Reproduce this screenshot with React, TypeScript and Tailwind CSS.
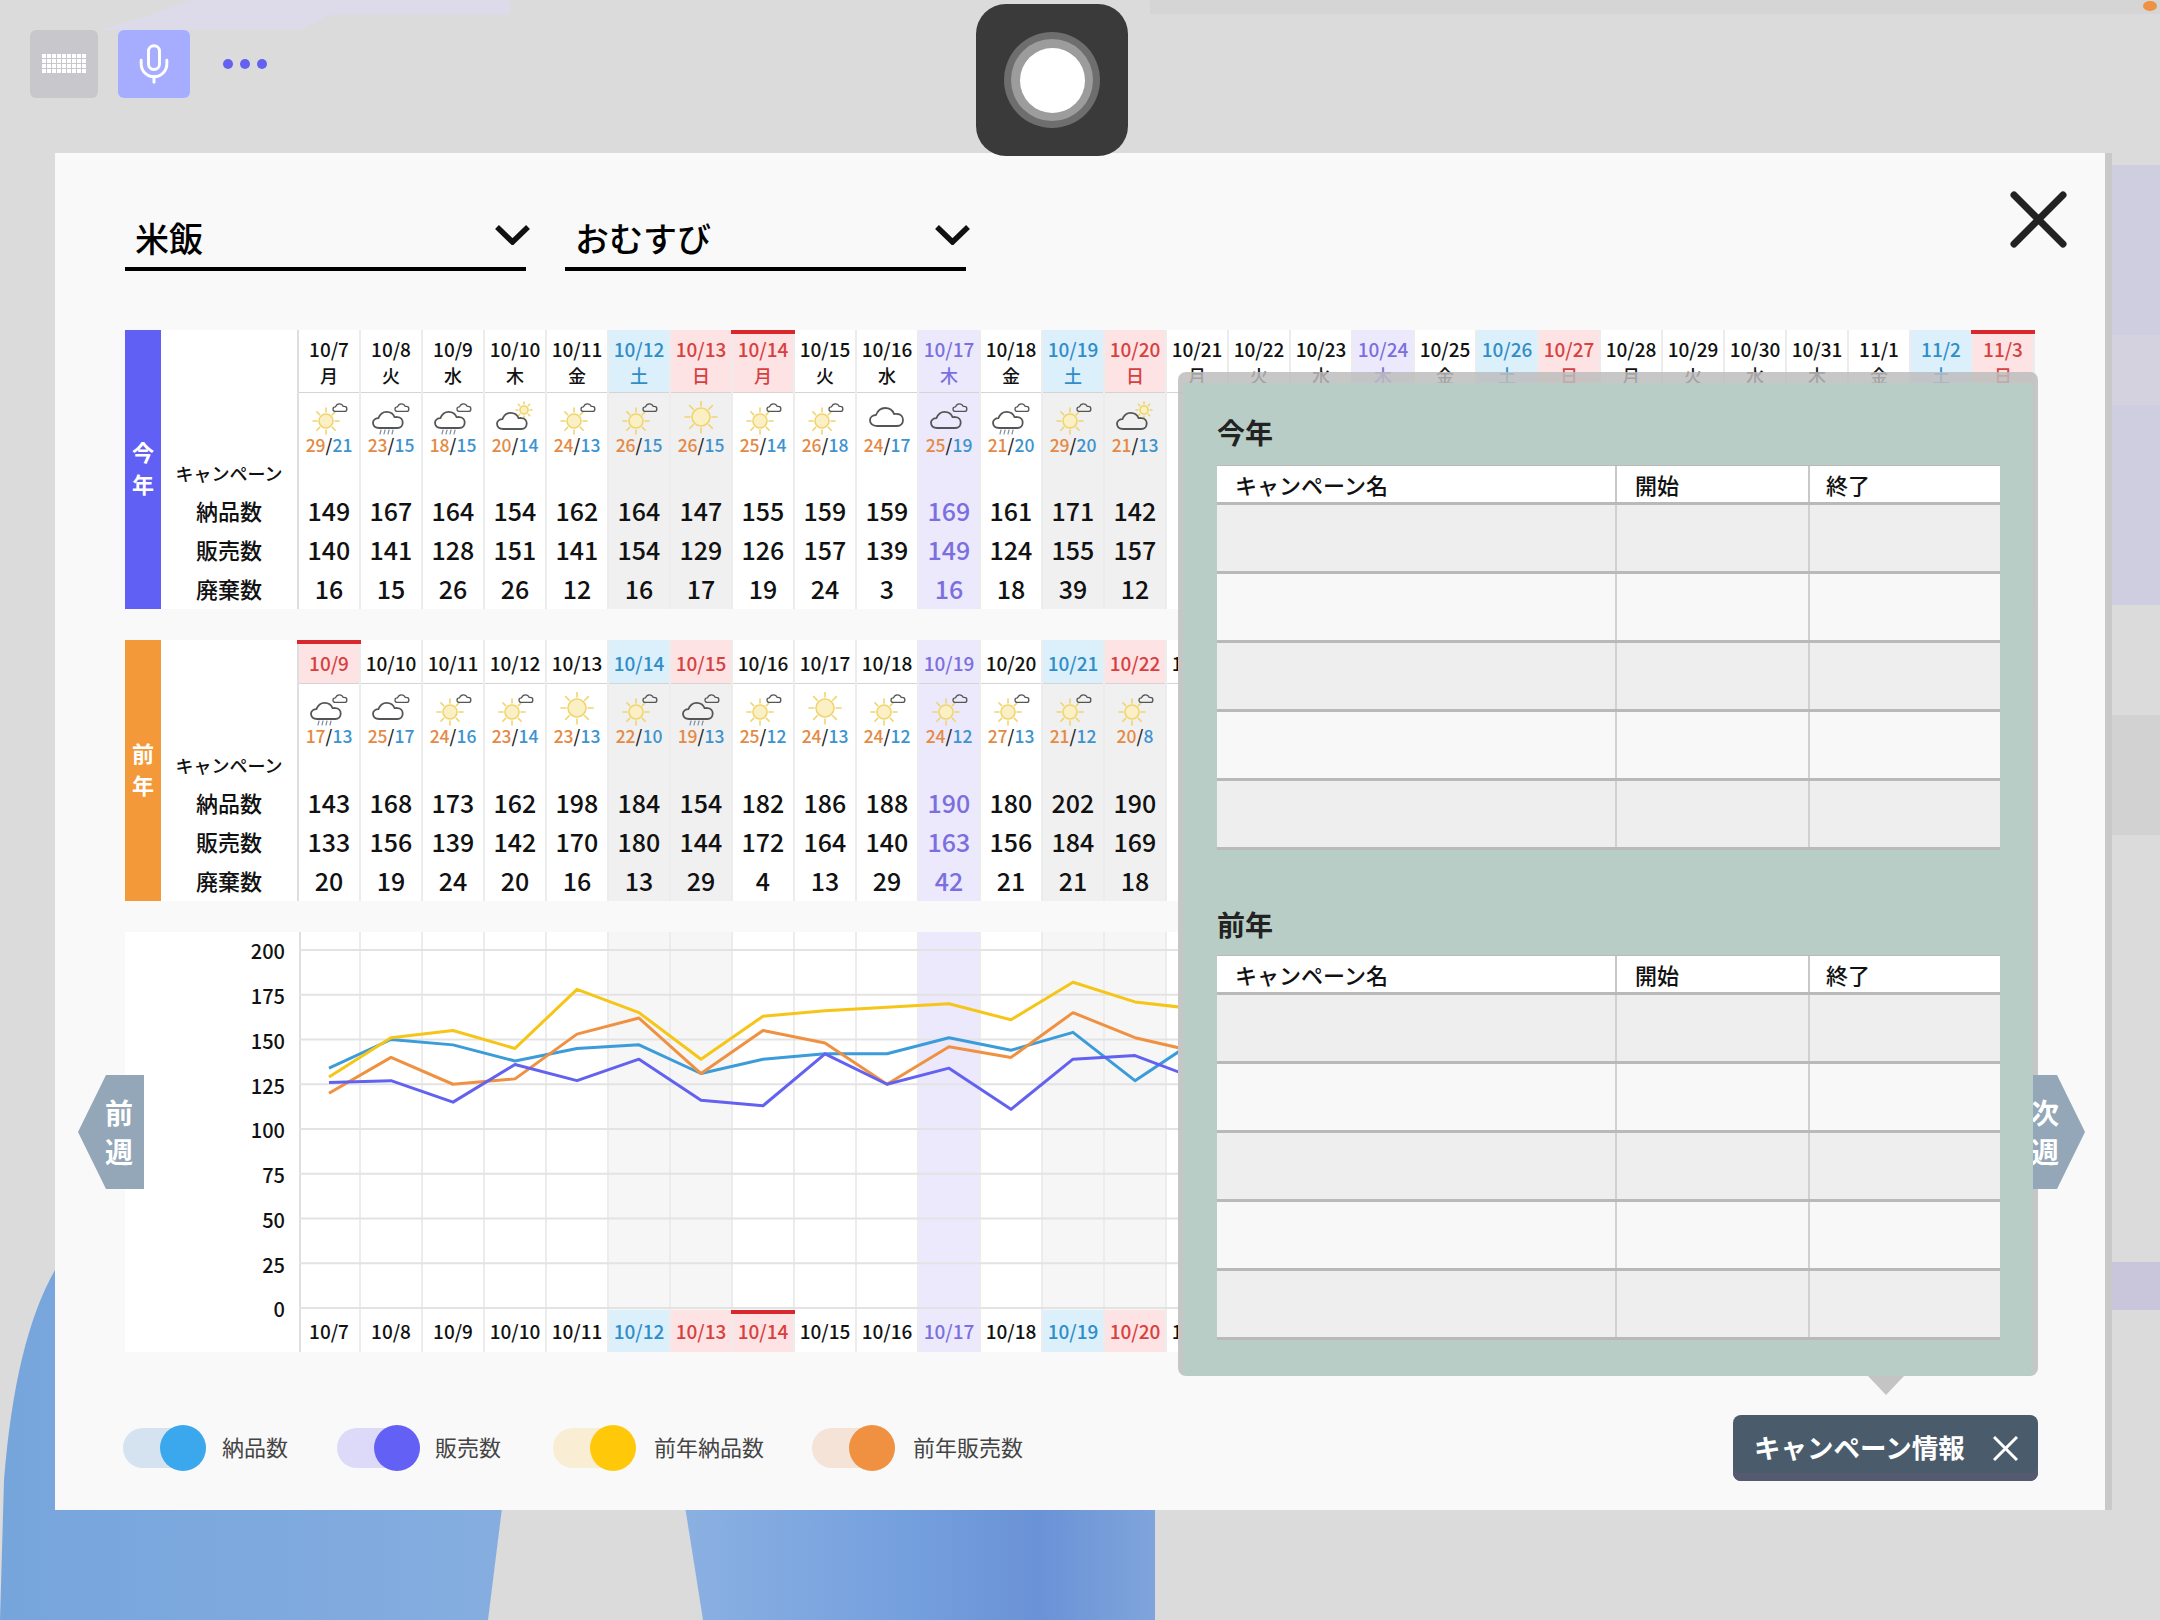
import React from 'react';
import { Mic } from 'lucide-react';

type DayKind = 'normal' | 'sat' | 'sun' | 'holiday' | 'today';
type Sky = 'sc' | 'crc' | 'cc' | 'cs' | 's' | 'c';

type Day = {
  date: string;
  week?: string;
  kind: DayKind;
  sky?: Sky;
  hi?: number;
  lo?: number;
  values?: number[];
};

const thisYear: Day[] = [
  { date: '10/7', week: '月', kind: 'normal', sky: 'sc', hi: 29, lo: 21, values: [149, 140, 16] },
  { date: '10/8', week: '火', kind: 'normal', sky: 'crc', hi: 23, lo: 15, values: [167, 141, 15] },
  { date: '10/9', week: '水', kind: 'normal', sky: 'crc', hi: 18, lo: 15, values: [164, 128, 26] },
  { date: '10/10', week: '木', kind: 'normal', sky: 'cs', hi: 20, lo: 14, values: [154, 151, 26] },
  { date: '10/11', week: '金', kind: 'normal', sky: 'sc', hi: 24, lo: 13, values: [162, 141, 12] },
  { date: '10/12', week: '土', kind: 'sat', sky: 'sc', hi: 26, lo: 15, values: [164, 154, 16] },
  { date: '10/13', week: '日', kind: 'sun', sky: 's', hi: 26, lo: 15, values: [147, 129, 17] },
  { date: '10/14', week: '月', kind: 'holiday', sky: 'sc', hi: 25, lo: 14, values: [155, 126, 19] },
  { date: '10/15', week: '火', kind: 'normal', sky: 'sc', hi: 26, lo: 18, values: [159, 157, 24] },
  { date: '10/16', week: '水', kind: 'normal', sky: 'c', hi: 24, lo: 17, values: [159, 139, 3] },
  { date: '10/17', week: '木', kind: 'today', sky: 'cc', hi: 25, lo: 19, values: [169, 149, 16] },
  { date: '10/18', week: '金', kind: 'normal', sky: 'crc', hi: 21, lo: 20, values: [161, 124, 18] },
  { date: '10/19', week: '土', kind: 'sat', sky: 'sc', hi: 29, lo: 20, values: [171, 155, 39] },
  { date: '10/20', week: '日', kind: 'sun', sky: 'cs', hi: 21, lo: 13, values: [142, 157, 12] },
  { date: '10/21', week: '月', kind: 'normal' },
  { date: '10/22', week: '火', kind: 'normal' },
  { date: '10/23', week: '水', kind: 'normal' },
  { date: '10/24', week: '木', kind: 'today' },
  { date: '10/25', week: '金', kind: 'normal' },
  { date: '10/26', week: '土', kind: 'sat' },
  { date: '10/27', week: '日', kind: 'sun' },
  { date: '10/28', week: '月', kind: 'normal' },
  { date: '10/29', week: '火', kind: 'normal' },
  { date: '10/30', week: '水', kind: 'normal' },
  { date: '10/31', week: '木', kind: 'normal' },
  { date: '11/1', week: '金', kind: 'normal' },
  { date: '11/2', week: '土', kind: 'sat' },
  { date: '11/3', week: '日', kind: 'holiday' },
];

const lastYear: Day[] = [
  { date: '10/9', kind: 'holiday', sky: 'crc', hi: 17, lo: 13, values: [143, 133, 20] },
  { date: '10/10', kind: 'normal', sky: 'cc', hi: 25, lo: 17, values: [168, 156, 19] },
  { date: '10/11', kind: 'normal', sky: 'sc', hi: 24, lo: 16, values: [173, 139, 24] },
  { date: '10/12', kind: 'normal', sky: 'sc', hi: 23, lo: 14, values: [162, 142, 20] },
  { date: '10/13', kind: 'normal', sky: 's', hi: 23, lo: 13, values: [198, 170, 16] },
  { date: '10/14', kind: 'sat', sky: 'sc', hi: 22, lo: 10, values: [184, 180, 13] },
  { date: '10/15', kind: 'sun', sky: 'crc', hi: 19, lo: 13, values: [154, 144, 29] },
  { date: '10/16', kind: 'normal', sky: 'sc', hi: 25, lo: 12, values: [182, 172, 4] },
  { date: '10/17', kind: 'normal', sky: 's', hi: 24, lo: 13, values: [186, 164, 13] },
  { date: '10/18', kind: 'normal', sky: 'sc', hi: 24, lo: 12, values: [188, 140, 29] },
  { date: '10/19', kind: 'today', sky: 'sc', hi: 24, lo: 12, values: [190, 163, 42] },
  { date: '10/20', kind: 'normal', sky: 'sc', hi: 27, lo: 13, values: [180, 156, 21] },
  { date: '10/21', kind: 'sat', sky: 'sc', hi: 21, lo: 12, values: [202, 184, 21] },
  { date: '10/22', kind: 'sun', sky: 'sc', hi: 20, lo: 8, values: [190, 169, 18] },
  { date: '10/23', kind: 'normal' },
];

const chartDays: { date: string; kind: DayKind }[] = thisYear.slice(0, 15);

const bodyBg: Record<DayKind, string> = {
  normal: 'bg-white',
  sat: 'bg-[#f0f0f0]',
  sun: 'bg-[#f0f0f0]',
  holiday: 'bg-white',
  today: 'bg-[#ece9fc]',
};

const chartBg: Record<DayKind, string> = {
  normal: 'bg-white',
  sat: 'bg-[#f6f6f6]',
  sun: 'bg-[#f6f6f6]',
  holiday: 'bg-white',
  today: 'bg-[#ece9fc]',
};

const headBg: Record<DayKind, string> = {
  normal: 'bg-white',
  sat: 'bg-[#dcf0fc]',
  sun: 'bg-[#fde3e3]',
  holiday: 'bg-[#fde3e3]',
  today: 'bg-[#ece9fc]',
};

const headText: Record<DayKind, string> = {
  normal: 'text-[#111111]',
  sat: 'text-[#2f8dc8]',
  sun: 'text-[#d8403f]',
  holiday: 'text-[#d8403f]',
  today: 'text-[#7b6fe0]',
};

const CJK = "font-['Noto_Sans_CJK_JP',sans-serif]";

const CLOUD =
  'M7 20 C2 20 0 17 0 14 C0 11 3 9 6 9 C8 4 12 2 15 2 C20 2 23 5 24 8 C25 8 26 7.5 27 8 C31 8 33 11 33 14 C33 17 31 20 27 20 Z';

const Sun = ({ cx, cy, r, ray }: { cx: number; cy: number; r: number; ray: number }) => (
  <g stroke="#f0d56f" fill="none" strokeWidth="1.6" strokeLinecap="round">
    <circle cx={cx} cy={cy} r={r} fill="#fbf0c4" />
    {[0, 45, 90, 135, 180, 225, 270, 315].map((a) => {
      const t = (a * Math.PI) / 180;
      return (
        <line
          key={a}
          x1={cx + Math.cos(t) * (r + 2)}
          y1={cy + Math.sin(t) * (r + 2)}
          x2={cx + Math.cos(t) * (r + ray)}
          y2={cy + Math.sin(t) * (r + ray)}
        />
      );
    })}
  </g>
);

const Cloud = ({ x, y, s, w = 1.8 }: { x: number; y: number; s: number; w?: number }) => (
  <path
    d={CLOUD}
    transform={`translate(${x} ${y}) scale(${s})`}
    fill="none"
    stroke="#555555"
    strokeWidth={w / s}
    strokeLinejoin="round"
  />
);

const Rain = () => (
  <g stroke="#7d8fa3" strokeWidth="1.2" strokeLinecap="round">
    <line x1="9" y1="33" x2="10" y2="29" />
    <line x1="13" y1="33" x2="14" y2="29" />
    <line x1="17" y1="33" x2="18" y2="29" />
    <line x1="21" y1="33" x2="22" y2="29" />
  </g>
);

const WeatherIcon = ({ sky }: { sky: Sky }) => (
  <svg viewBox="0 0 40 34" className="h-[34px] w-[40px] shrink-0">
    {sky === 'sc' && (
      <>
        <Sun cx={17} cy={20} r={7} ray={6} />
        <Cloud x={24} y={2} s={0.42} w={1.3} />
      </>
    )}
    {sky === 's' && <Sun cx={20} cy={16} r={9} ray={7} />}
    {sky === 'c' && <Cloud x={3} y={5} s={1} />}
    {(sky === 'crc' || sky === 'cc') && (
      <>
        <Cloud x={2} y={9} s={0.9} />
        <Cloud x={24} y={2} s={0.42} w={1.3} />
      </>
    )}
    {sky === 'crc' && <Rain />}
    {sky === 'cs' && (
      <>
        <Sun cx={29} cy={9} r={4} ray={4} />
        <Cloud x={2} y={10} s={0.9} />
      </>
    )}
  </svg>
);

const rowLabels = ['納品数', '販売数', '廃棄数'];

const LabelColumn = ({ headClass, weatherClass }: { headClass: string; weatherClass: string }) => (
  <div className="w-[138px] shrink-0 bg-white border-r-2 border-[#dfdfdf] flex flex-col items-center">
    <div className={headClass} />
    <div className={weatherClass} />
    <div className="h-[35px] flex items-center text-[18px] font-medium text-[#111111]">キャンペーン</div>
    {rowLabels.map((label) => (
      <div key={label} className="h-[39px] flex items-center text-[22px] font-medium text-[#111111]">
        {label}
      </div>
    ))}
  </div>
);

const DayColumn = ({ day, compact }: { day: Day; compact: boolean }) => {
  const numberColor = day.kind === 'today' ? 'text-[#7b6fe0]' : 'text-[#111111]';
  return (
    <div className={`relative w-[62px] shrink-0 border-r-2 border-[#ececec] flex flex-col items-center ${bodyBg[day.kind]}`}>
      <div
        className={`w-full flex flex-col items-center border-b border-[#d4d4d4] font-medium ${headBg[day.kind]} ${headText[day.kind]} ${
          compact ? 'h-[44px] pt-[10px]' : 'h-[63px] pt-[6px]'
        }`}
      >
        <span className="text-[19px] leading-[26px] whitespace-nowrap">{day.date}</span>
        {day.week && <span className="text-[18px] leading-[26px]">{day.week}</span>}
      </div>
      {day.kind === 'holiday' && <div className="absolute top-0 -left-[2px] w-[64px] h-[4px] bg-[#d8282d]" />}
      <div className={`w-full flex flex-col items-center pt-[8px] ${compact ? 'h-[64px]' : 'h-[63px]'}`}>
        {day.sky && <WeatherIcon sky={day.sky} />}
        {day.hi !== undefined && (
          <div className="text-[17.5px] leading-[20px] font-medium whitespace-nowrap">
            <span className="text-[#e58a45]">{day.hi}</span>
            <span className="text-[#222222]">/</span>
            <span className="text-[#3d93cf]">{day.lo}</span>
          </div>
        )}
      </div>
      <div className="h-[35px]" />
      {day.values?.map((v, i) => (
        <div key={i} className={`h-[39px] flex items-center text-[25px] font-medium ${numberColor}`}>
          {v}
        </div>
      ))}
    </div>
  );
};

const Band = ({ text, color }: { text: string[]; color: string }) => (
  <div className={`w-[36px] shrink-0 flex flex-col items-center justify-center pb-[6px] text-white text-[22px] font-bold leading-[32px] ${color}`}>
    {text.map((t) => (
      <span key={t}>{t}</span>
    ))}
  </div>
);

const series = [
  { color: '#3b9cd9', data: [134, 150, 147, 138, 145, 147, 131, 139, 142, 142, 151, 144, 154, 127, 150] },
  { color: '#f5c518', data: [129, 151, 155, 145, 178, 165, 139, 163, 166, 168, 170, 161, 182, 171, 167] },
  { color: '#ef9141', data: [120, 140, 125, 128, 153, 162, 131, 155, 148, 125, 146, 140, 165, 151, 143] },
  { color: '#6361f0', data: [126, 127, 115, 136, 127, 139, 116, 113, 142, 125, 134, 111, 139, 141, 128] },
];

const axis = [200, 175, 150, 125, 100, 75, 50, 25, 0];

const Chart = () => (
  <div className="mt-[31px] w-[1053px] h-[420px] flex bg-white overflow-hidden">
    <div className="w-[174px] shrink-0 pr-[14px] -mt-[3px] flex flex-col items-end text-[20px] font-medium text-[#111111]">
      {axis.map((a) => (
        <div key={a} className="h-[44.75px] shrink-0 flex items-center">
          {a}
        </div>
      ))}
    </div>
    <div className="relative w-[879px] shrink-0 flex overflow-hidden">
      {chartDays.map((d) => (
        <div key={d.date} className={`relative w-[62px] shrink-0 border-r-2 border-[#ececec] flex flex-col justify-end ${chartBg[d.kind]}`}>
          <div className={`h-[42px] flex items-center justify-center text-[19px] font-medium whitespace-nowrap ${headBg[d.kind]} ${headText[d.kind]}`}>
            {d.date}
          </div>
          {d.kind === 'holiday' && <div className="absolute bottom-[38px] -left-[2px] w-[64px] h-[4px] bg-[#d8282d]" />}
        </div>
      ))}
      <svg className="absolute inset-0 w-[879px] h-[420px]" viewBox="0 0 879 420">
        <line x1="0" y1="0" x2="0" y2="420" stroke="#dfdfdf" strokeWidth="4" />
        {axis.map((a) => (
          <line key={a} x1="0" x2="879" y1={376 - a * 1.79} y2={376 - a * 1.79} stroke="#e3e3e3" strokeWidth="2" />
        ))}
        {series.map((s) => (
          <polyline
            key={s.color}
            fill="none"
            stroke={s.color}
            strokeWidth="3"
            strokeLinejoin="round"
            points={s.data.map((v, i) => `${30 + i * 62},${376 - v * 1.79}`).join(' ')}
          />
        ))}
      </svg>
    </div>
  </div>
);

const Toggle = ({ track, knob, label, gap, width }: { track: string; knob: string; label: string; gap: string; width: string }) => (
  <div className={`flex items-center ${width}`}>
    <div className={`w-[83px] h-[40px] rounded-full flex items-center justify-end ${track}`}>
      <div className={`w-[46px] h-[46px] rounded-full shrink-0 ${knob}`} />
    </div>
    <span className={`text-[22px] text-[#444444] whitespace-nowrap -mt-[3px] ${gap}`}>{label}</span>
  </div>
);

const Select = ({ value }: { value: string }) => (
  <div className="w-[401px] h-[61px] border-b-4 border-black flex items-center justify-between pl-[10px]">
    <span className="text-[34px] font-medium text-black leading-none -mt-[2px]">{value}</span>
    <svg viewBox="0 0 35 20" className="w-[35px] h-[20px] -mr-[4px] -mt-[8px]" fill="none" stroke="#111111" strokeWidth="5.5">
      <path d="M2 2 L17.5 17 L33 2" />
    </svg>
  </div>
);

const CampaignTable = () => (
  <div className="w-[783px] text-[#111111]">
    <div className="h-[40px] grid grid-cols-[398px_193px_192px] bg-white border-b-[3px] border-t border-[#b9b9b9] text-[22px] font-medium leading-[36px]">
      <div className="pl-[18px]">キャンペーン名</div>
      <div className="pl-[18px] border-l-2 border-[#c8c8c8]">開始</div>
      <div className="pl-[16px] border-l-2 border-[#c8c8c8]">終了</div>
    </div>
    {[0, 1, 2, 3, 4].map((r) => (
      <div key={r} className={`h-[69px] grid grid-cols-[398px_193px_192px] border-b-[3px] border-[#b9b9b9] ${r % 2 === 0 ? 'bg-[#eeeeee]' : 'bg-[#f8f8f8]'}`}>
        <div />
        <div className="border-l-2 border-[#d0d0d0]" />
        <div className="border-l-2 border-[#d0d0d0]" />
      </div>
    ))}
  </div>
);

const Wallpaper = () => (
  <svg className="absolute inset-0 w-full h-full" viewBox="0 0 2160 1620">
    <defs>
      <linearGradient id="cloth" gradientUnits="userSpaceOnUse" x1="0" y1="0" x2="1155" y2="0">
        <stop offset="0" stopColor="#76a5dc" />
        <stop offset="0.43" stopColor="#85ade0" />
        <stop offset="0.6" stopColor="#8ab0e2" />
        <stop offset="0.78" stopColor="#75a0de" />
        <stop offset="0.9" stopColor="#6a92d6" />
        <stop offset="1" stopColor="#80a5dc" />
      </linearGradient>
    </defs>
    <rect x="1150" y="0" width="1010" height="14" fill="#d5d5d5" />
    <path d="M100 30 L300 30 L330 15 L510 15 L510 0 L190 0 L150 15 Z" fill="#dddbe9" />
    <rect x="2112" y="165" width="48" height="170" fill="#cfcde0" />
    <rect x="2112" y="335" width="48" height="70" fill="#d3d2de" />
    <rect x="2112" y="405" width="48" height="200" fill="#cfcde0" />
    <rect x="2112" y="715" width="48" height="120" fill="#d2d2d2" />
    <rect x="2112" y="1262" width="48" height="48" fill="#c9c6dc" />
    <ellipse cx="2150" cy="6" rx="7" ry="5" fill="#ef9141" />
    <path d="M55 1270 Q15 1340 4 1480 L0 1620 L488 1620 L503 1500 L55 1500 Z" fill="url(#cloth)" />
    <path d="M684 1500 L703 1620 L1155 1620 L1155 1500 Z" fill="url(#cloth)" />
  </svg>
);

export default function App() {
  return (
    <div className={`relative w-[2160px] h-[1620px] overflow-hidden bg-[#dbdbdb] ${CJK}`}>
      <Wallpaper />

      <div className="relative flex items-center pt-[30px] pl-[30px]">
        <div className="w-[68px] h-[68px] rounded-[6px] bg-[#c8c8cc] flex items-center justify-center">
          <svg viewBox="0 0 44 20" className="w-[44px] h-[20px]" fill="#ffffff">
            {[0, 1, 2, 3].map((r) =>
              [0, 1, 2, 3, 4, 5, 6, 7, 8].map((c) => <rect key={`${r}-${c}`} x={c * 5} y={r * 5} width="4" height="4" />)
            )}
          </svg>
        </div>
        <div className="ml-[20px] w-[72px] h-[68px] rounded-[6px] bg-[#a6adff] flex items-center justify-center text-white">
          <Mic size={44} strokeWidth={1.6} />
        </div>
        <div className="ml-[33px] flex gap-[7px]">
          <div className="w-[10px] h-[10px] rounded-full bg-[#6561f0]" />
          <div className="w-[10px] h-[10px] rounded-full bg-[#6561f0]" />
          <div className="w-[10px] h-[10px] rounded-full bg-[#6561f0]" />
        </div>
      </div>

      <div className="absolute left-[55px] top-[153px] w-[2050px] h-[1357px] bg-[#f9f9f9] pl-[70px] pr-[67px] pt-[57px] shadow-[7px_0_0_#c9c9c9]">
        <div className="flex gap-[39px]">
          <Select value="米飯" />
          <Select value="おむすび" />
        </div>

        <svg viewBox="0 0 57 57" className="absolute left-[1955px] top-[38px] w-[57px] h-[57px]" stroke="#222222" strokeWidth="7" strokeLinecap="round">
          <path d="M4 4 L53 53 M53 4 L4 53" />
        </svg>

        <div className="mt-[59px] flex h-[279px]">
          <Band text={['今', '年']} color="bg-[#6160f5]" />
          <LabelColumn headClass="h-[63px]" weatherClass="h-[63px]" />
          {thisYear.map((d) => (
            <DayColumn key={d.date} day={d} compact={false} />
          ))}
        </div>

        <div className="mt-[31px] flex h-[261px] w-[1053px] overflow-hidden">
          <Band text={['前', '年']} color="bg-[#f3993a]" />
          <LabelColumn headClass="h-[44px]" weatherClass="h-[64px]" />
          {lastYear.map((d) => (
            <DayColumn key={d.date} day={d} compact />
          ))}
        </div>

        <Chart />

        <div className="mt-[63px] flex items-center justify-between">
          <div className="flex items-center -ml-[2px]">
            <Toggle track="bg-[#d5e3f1]" knob="bg-[#3ba7ec]" label="納品数" gap="ml-[16px]" width="w-[214px]" />
            <Toggle track="bg-[#dcdaf8]" knob="bg-[#6361f5]" label="販売数" gap="ml-[15px]" width="w-[216px]" />
            <Toggle track="bg-[#f9edd4]" knob="bg-[#ffc90a]" label="前年納品数" gap="ml-[18px]" width="w-[259px]" />
            <Toggle track="bg-[#f4e3d6]" knob="bg-[#ef9141]" label="前年販売数" gap="ml-[18px]" width="w-[212px]" />
          </div>
          <div className="w-[305px] h-[66px] rounded-[8px] bg-[#4a5c6b] shadow-[inset_0_-8px_0_#565a70] flex items-center justify-between pl-[21px] pr-[20px] text-white">
            <span className="text-[26.5px] font-semibold whitespace-nowrap -mt-[2px]">キャンペーン情報</span>
            <svg viewBox="0 0 25 25" className="w-[25px] h-[25px]" stroke="#ffffff" strokeWidth="3">
              <path d="M1 1 L24 24 M24 1 L1 24" />
            </svg>
          </div>
        </div>

        <div className="absolute left-[1123px] top-[219px] w-[860px] h-[1004px] rounded-t-[8px] rounded-b-[8px] bg-[#bdbdbd]/85 pt-[11px] px-[5px]">
          <div className="h-[993px] bg-[#b8cdc5] rounded-b-[6px] pt-[31px] pl-[34px]">
            <div className="text-[28px] leading-[36px] font-semibold text-[#222222] mb-[15px]">今年</div>
            <CampaignTable />
            <div className="mt-[56px] text-[28px] leading-[36px] font-semibold text-[#222222] mb-[13px]">前年</div>
            <CampaignTable />
          </div>
        </div>
        <div className="absolute left-[1813px] top-[1223px] w-[36px] h-[19px] bg-[#c4c4c4] [clip-path:polygon(0_0,100%_0,50%_100%)]" />

        <div className="absolute left-[23px] top-[922px] w-[66px] h-[114px] bg-[#93a7b8] [clip-path:polygon(0_50%,28px_0,100%_0,100%_100%,28px_100%)] pl-[16px] flex flex-col items-center justify-center text-white text-[28px] font-bold leading-[39px]">
          <span>前</span>
          <span>週</span>
        </div>
        <div className="absolute left-[1978px] top-[922px] w-[52px] h-[114px] bg-[#93a7b8] [clip-path:polygon(0_0,24px_0,100%_50%,24px_100%,0_100%)] pr-[28px] flex flex-col items-center justify-center text-white text-[28px] font-bold leading-[39px]">
          <span>次</span>
          <span>週</span>
        </div>
      </div>

      <div className="absolute left-[976px] top-[4px] w-[152px] h-[152px] rounded-[30px] bg-[#3a3a3a] flex items-center justify-center">
        <div className="w-[96px] h-[96px] rounded-full bg-[#6e6e6e] flex items-center justify-center">
          <div className="w-[82px] h-[82px] rounded-full bg-[#9c9c9c] flex items-center justify-center">
            <div className="w-[65px] h-[65px] rounded-full bg-white" />
          </div>
        </div>
      </div>
    </div>
  );
}
